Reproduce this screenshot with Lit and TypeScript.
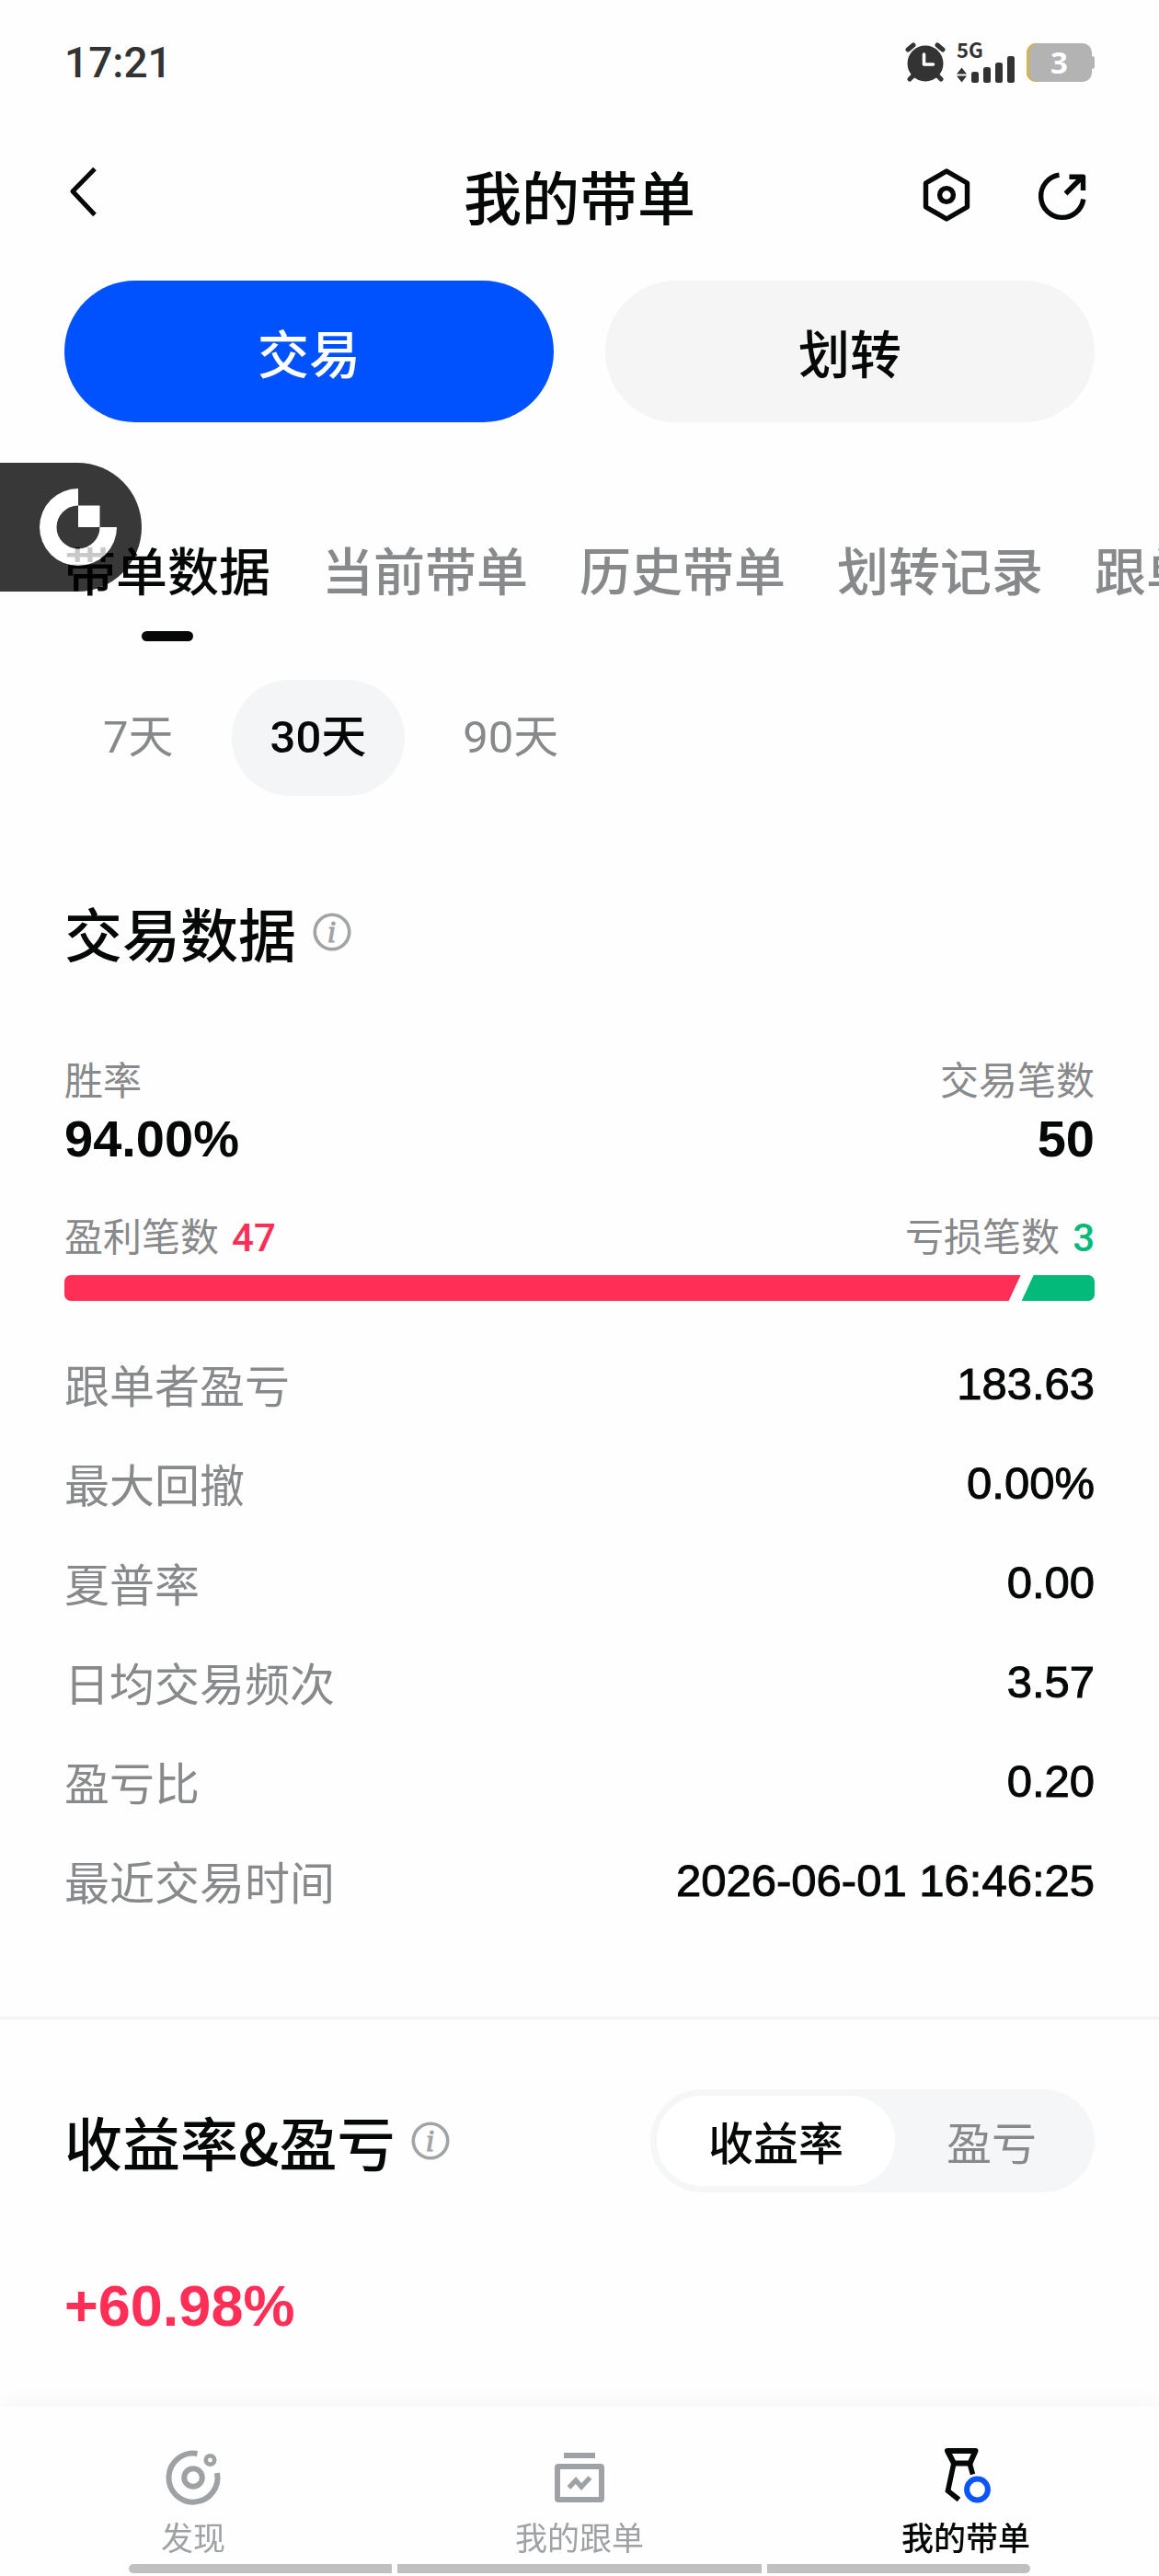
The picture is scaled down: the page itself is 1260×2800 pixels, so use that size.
import { LitElement, html, css, svg } from "lit";
import { customElement, state } from "lit/decorators.js";
import { classMap } from "lit/directives/class-map.js";

const TABS = ["带单数据", "当前带单", "历史带单", "划转记录", "跟单者"];
const PERIODS = ["7天", "30天", "90天"];
const METRICS = ["收益率", "盈亏"];
const STATS: [string, string][] = [
  ["跟单者盈亏", "183.63"],
  ["最大回撤", "0.00%"],
  ["夏普率", "0.00"],
  ["日均交易频次", "3.57"],
  ["盈亏比", "0.20"],
  ["最近交易时间", "2026-06-01 16:46:25"],
];
const WINS = 47;
const LOSSES = 3;

const alarmIcon = svg`
  <svg width="44" height="44" viewBox="0 0 44 44" fill="none" aria-hidden="true">
    <g stroke="#333" stroke-width="5" stroke-linecap="round">
      <path d="M3 8 9 3M41 8 35 3" />
      <path d="M10 35 5 40M34 35 39 40" />
    </g>
    <circle cx="22" cy="23" r="19.500" fill="#333" />
    <path d="M20.500 13v11h10" stroke="#fff" stroke-width="3.600" stroke-linecap="round" stroke-linejoin="round" />
  </svg>`;

const signalIcon = svg`
  <svg width="64" height="30" viewBox="0 0 64 30" fill="#333" aria-hidden="true">
    <path d="M0 20.500 5.500 13.500 11 20.500zM0 22.500h11l-5.500 7z" />
    <rect x="16" y="18" width="8" height="12" rx="2.500" />
    <rect x="29" y="13" width="8" height="17" rx="2.500" />
    <rect x="42" y="8" width="8" height="22" rx="2.500" />
    <rect x="55" y="1" width="8" height="29" rx="2.500" />
  </svg>`;

const backIcon = svg`
  <svg width="42" height="60" viewBox="0 0 42 60" fill="none" stroke="#060808" stroke-width="5" aria-hidden="true">
    <path d="M33 3.500 9 28l24 25.500" stroke-linejoin="round" />
  </svg>`;

const settingsIcon = svg`
  <svg width="70" height="60" viewBox="-7 0 70 60" fill="none" stroke="#060808" stroke-width="5.400" aria-hidden="true">
    <path d="M28 4 50.500 17v26L28 56 5.500 43V17z" stroke-linejoin="round" />
    <circle cx="28" cy="30" r="7.400" />
  </svg>`;

const shareIcon = svg`
  <svg width="70" height="60" viewBox="-7 0 70 60" fill="none" stroke="#060808" stroke-width="5.400" aria-hidden="true">
    <path d="M24.500 8.200A23.200 23.200 0 1 0 50.800 34.500" />
    <path d="M31.500 28.500 49 11" />
    <path d="M35.500 10.200H50.500V25" stroke-linejoin="round" />
  </svg>`;

const infoIcon = svg`
  <svg width="42" height="42" viewBox="0 0 42 42" aria-hidden="true">
    <circle cx="21" cy="21" r="18.700" fill="none" stroke="#a1a3a5" stroke-width="3.600" />
    <text x="20.500" y="32" text-anchor="middle" class="info-i">i</text>
  </svg>`;

const brandIcon = svg`
  <svg width="84" height="84" viewBox="0 0 84 84" fill="#fff" aria-hidden="true">
    <path d="M42 0A42 42 0 1 0 84 42H65.500A23.500 23.500 0 1 1 42 18.500z" />
    <path d="M42 18.500h23.500V42H42z" />
  </svg>`;

const discoverIcon = svg`
  <svg width="64" height="64" viewBox="0 0 64 64" fill="none" stroke="#9fa2a4" stroke-width="6" aria-hidden="true">
    <path d="M36.500 6A26.500 26.500 0 1 0 58 27" />
    <circle cx="32" cy="32" r="9.800" />
    <circle cx="50.500" cy="13" r="4.700" stroke-width="4.600" />
  </svg>`;

const followIcon = svg`
  <svg width="64" height="64" viewBox="0 0 64 64" fill="none" stroke="#9fa2a4" stroke-width="6" aria-hidden="true">
    <path d="M15 8h34" />
    <rect x="8" y="20" width="48" height="36" rx="1" />
    <path d="M20.500 43 28 35l6 7 9.500-10" stroke-width="5.400" />
  </svg>`;

const leadIcon = svg`
  <svg width="64" height="64" viewBox="0 0 64 64" fill="none" stroke="#060808" stroke-width="6" aria-hidden="true">
    <path d="M12 3H42.500L36.500 16.500H19z" stroke-linejoin="round" />
    <path d="M19 16 12.500 46.500 24.500 56" stroke-width="5.600" />
    <path d="M36 16 39.500 28.500" stroke-width="5.600" />
    <circle cx="44.500" cy="45" r="11.400" stroke="#0a55f7" />
  </svg>`;

const NAV = [
  { label: "发现", icon: discoverIcon },
  { label: "我的跟单", icon: followIcon },
  { label: "我的带单", icon: leadIcon },
];

@customElement("app-root")
export class AppRoot extends LitElement {
  @state() private tab = 0;
  @state() private period = 1;
  @state() private metric = 0;

  static styles = css`
    :host {
      display: block;
      font-family: Roboto, "Noto Sans CJK SC", sans-serif;
      color: #060808;
      background: #fefefe;
    }
    * {
      box-sizing: border-box;
    }
    button {
      font: inherit;
      color: inherit;
      background: none;
      border: 0;
      margin: 0;
      padding: 0;
      white-space: nowrap;
    }
    h1, h2, dl, dd, dt, p {
      margin: 0;
      font-weight: inherit;
    }
    svg {
      display: block;
      flex: none;
    }
    .page {
      position: relative;
      display: flex;
      flex-direction: column;
      min-height: 100vh;
      overflow: hidden;
    }
    .status {
      display: flex;
      align-items: center;
      justify-content: space-between;
      padding: 38px 70px 37px;
      line-height: 60px;
      color: #333;
    }
    .clock {
      font-size: 46px;
      font-weight: 500;
    }
    .indicators {
      display: flex;
      align-items: center;
      gap: 12px;
    }
    .network {
      font-family: "Noto Sans CJK SC", sans-serif;
      font-size: 22px;
      font-weight: 700;
      line-height: 14px;
    }
    .battery {
      display: flex;
      align-items: center;
    }
    .battery-body {
      width: 71px;
      border-radius: 10px;
      background: #b3b3b3;
      box-shadow: inset 3px 0 #d5b350;
      color: #fff;
      font-family: "Open Sans", sans-serif;
      font-size: 33px;
      font-weight: 700;
      line-height: 42px;
      text-align: center;
    }
    .battery-tip {
      width: 3px;
      height: 14px;
      border-radius: 0 3px 3px 0;
      background: #b3b3b3;
    }
    .header {
      display: grid;
      grid-template-columns: 1fr auto 1fr;
      align-items: center;
      padding: 37px 70px 41px;
    }
    .title, .action, .heading h2, .stat dt, .switch, .nav-item {
      font-family: "Noto Sans CJK SC", sans-serif;
    }
    .title {
      font-size: 63px;
      font-weight: 500;
      line-height: 80px;
    }
    .tools {
      display: flex;
      justify-content: flex-end;
      gap: 56px;
    }
    .actions {
      display: grid;
      grid-template-columns: 1fr 1fr;
      gap: 56px;
      padding: 12px 70px 0;
    }
    .action {
      border-radius: 77px;
      background: #f5f5f5;
      font-size: 56px;
      font-weight: 500;
      line-height: 154px;
    }
    .primary {
      background: #0052ff;
      color: #fff;
    }
    .tabs {
      display: flex;
      gap: 56px;
      padding: 124px 0 0 70px;
      font-size: 56px;
      font-weight: 500;
      line-height: 80px;
      color: #87898b;
    }
    .tab {
      display: flex;
      flex: none;
      flex-direction: column;
      align-items: center;
      gap: 23px;
    }
    .tab.on {
      color: #060808;
    }
    .tab.on::after {
      content: "";
      width: 56px;
      height: 11px;
      border-radius: 6px;
      background: #060808;
    }
    .periods {
      display: flex;
      gap: 21px;
      padding: 42px 70px 0;
      font-size: 49px;
      line-height: 126px;
      color: #87898b;
    }
    .period {
      padding: 0 42px;
      border-radius: 63px;
    }
    .period.on {
      background: #f4f5f7;
      color: #060808;
      font-weight: 500;
    }
    .section {
      padding: 108px 70px 0;
    }
    .heading {
      display: flex;
      align-items: center;
      gap: 18px;
    }
    .heading h2 {
      font-size: 63px;
      font-weight: 500;
      line-height: 80px;
    }
    .info-i {
      font-family: "Liberation Serif", serif;
      font-size: 34px;
      font-style: italic;
      fill: #a1a3a5;
      stroke: #a1a3a5;
      stroke-width: 1px;
    }
    .split {
      display: flex;
      align-items: flex-end;
      justify-content: space-between;
    }
    .summary {
      padding-top: 93px;
      font-size: 42px;
      line-height: 60px;
    }
    .summary div:last-child {
      text-align: right;
    }
    .label {
      color: #87898b;
    }
    .big {
      font-family: "Liberation Sans", sans-serif;
      font-size: 56px;
      font-weight: 700;
      line-height: 64px;
    }
    .counts {
      padding: 46px 0 10px;
      font-size: 42px;
      line-height: 60px;
    }
    .count {
      display: flex;
      gap: 14px;
    }
    .win, .loss {
      font-weight: 500;
    }
    .win {
      color: #ff2e57;
    }
    .loss {
      color: #03ba7b;
    }
    .ratio {
      display: flex;
      gap: 1px;
      height: 28px;
      overflow: hidden;
      border-radius: 7px;
    }
    .ratio-win {
      flex-basis: 0;
      background: #ff2e57;
      clip-path: polygon(0 0, 100% 0, calc(100% - 13px) 100%, 0 100%);
    }
    .ratio-loss {
      flex-basis: 13px;
      background: #03ba7b;
      clip-path: polygon(13px 0, 100% 0, 100% 100%, 0 100%);
    }
    .stats {
      display: grid;
      gap: 48px;
      padding: 60px 0 118px;
      font-size: 49px;
      line-height: 60px;
    }
    .stat {
      display: flex;
      justify-content: space-between;
    }
    .stat dd {
      font-family: "Liberation Sans", sans-serif;
      -webkit-text-stroke: 1px currentColor;
    }
    .returns {
      flex: 1;
      padding: 76px 70px 60px;
      border-top: 3px solid #f3f3f4;
    }
    .returns .split {
      align-items: center;
    }
    .switch {
      display: flex;
      padding: 7px;
      border-radius: 56px;
      background: #f4f6f8;
      font-size: 49px;
      line-height: 98px;
      color: #87898b;
    }
    .metric {
      padding: 0 56px;
      border-radius: 49px;
    }
    .metric.on {
      background: #fff;
      color: #060808;
      font-weight: 500;
    }
    .rate {
      padding-top: 83px;
      font-family: "Liberation Sans", sans-serif;
      font-size: 63px;
      font-weight: 700;
      line-height: 80px;
      color: #ff2e57;
    }
    .nav {
      position: sticky;
      bottom: 0;
      padding-bottom: 3px;
      background: #fefefe;
      box-shadow: 0 -6px 20px #00000008;
    }
    .nav-items {
      display: grid;
      grid-template-columns: repeat(3, 1fr);
      padding-top: 45px;
    }
    .nav-item {
      display: flex;
      flex-direction: column;
      align-items: center;
      gap: 8px;
      color: #9fa2a4;
      text-decoration: none;
      font-size: 35px;
      line-height: 48px;
    }
    .nav-item.on {
      color: #060808;
      font-weight: 500;
    }
    .home {
      display: grid;
      grid-template-columns: 286fr 397fr 286fr;
      gap: 6px;
      height: 10px;
      margin: 6px 140px 0;
      border-radius: 5px;
      overflow: hidden;
    }
    .home span {
      background: #c0c0c0;
    }
    .float {
      position: absolute;
      top: 503px;
      left: 0;
      width: 154px;
      height: 140px;
      padding: 28px 27px 28px 43px;
      border-radius: 0 70px 70px 0;
      background: #000;
      opacity: 0.78;
    }
  `;

  private renderStatus() {
    return html`
      <div class="status">
        <span class="clock">17:21</span>
        <div class="indicators">
          ${alarmIcon}
          <div class="network">5G${signalIcon}</div>
          <div class="battery">
            <span class="battery-body">3</span><span class="battery-tip"></span>
          </div>
        </div>
      </div>
    `;
  }

  render() {
    return html`
      <div class="page">
        ${this.renderStatus()}
        <header class="header">
          <div><button aria-label="返回">${backIcon}</button></div>
          <h1 class="title">我的带单</h1>
          <div class="tools">
            <button aria-label="设置">${settingsIcon}</button>
            <button aria-label="分享">${shareIcon}</button>
          </div>
        </header>

        <div class="actions">
          <button class="action primary">交易</button>
          <button class="action">划转</button>
        </div>

        <div class="tabs" role="tablist">
          ${TABS.map(
            (t, i) => html`<button
              role="tab"
              aria-selected=${i === this.tab}
              class=${classMap({ tab: true, on: i === this.tab })}
              @click=${() => (this.tab = i)}
            >${t}</button>`
          )}
        </div>

        <div class="periods">
          ${PERIODS.map(
            (p, i) => html`<button
              aria-pressed=${i === this.period}
              class=${classMap({ period: true, on: i === this.period })}
              @click=${() => (this.period = i)}
            >${p}</button>`
          )}
        </div>

        <section class="section">
          <div class="heading">
            <h2>交易数据</h2>
            <button aria-label="交易数据说明">${infoIcon}</button>
          </div>
          <div class="split summary">
            <div>
              <p class="label">胜率</p>
              <p class="big">94.00%</p>
            </div>
            <div>
              <p class="label">交易笔数</p>
              <p class="big">${WINS + LOSSES}</p>
            </div>
          </div>
          <div class="split counts">
            <p class="count"><span class="label">盈利笔数</span><span class="win">${WINS}</span></p>
            <p class="count"><span class="label">亏损笔数</span><span class="loss">${LOSSES}</span></p>
          </div>
          <div class="ratio">
            <div class="ratio-win" style="flex-grow:${WINS}"></div>
            <div class="ratio-loss" style="flex-grow:${LOSSES}"></div>
          </div>
          <dl class="stats">
            ${STATS.map(
              ([k, v]) => html`<div class="stat"><dt class="label">${k}</dt><dd>${v}</dd></div>`
            )}
          </dl>
        </section>

        <section class="returns">
          <div class="split">
            <div class="heading">
              <h2>收益率&amp;盈亏</h2>
              <button aria-label="收益率说明">${infoIcon}</button>
            </div>
            <div class="switch">
              ${METRICS.map(
                (m, i) => html`<button
                  aria-pressed=${i === this.metric}
                  class=${classMap({ metric: true, on: i === this.metric })}
                  @click=${() => (this.metric = i)}
                >${m}</button>`
              )}
            </div>
          </div>
          <p class="rate">+60.98%</p>
        </section>

        <footer class="nav">
          <nav class="nav-items">
            ${NAV.map(
              (n, i) => html`<a href="#" class=${classMap({ "nav-item": true, on: i === 2 })}>
                ${n.icon}<span>${n.label}</span>
              </a>`
            )}
          </nav>
          <div class="home"><span></span><span></span><span></span></div>
        </footer>

        <button class="float" aria-label="快捷入口">${brandIcon}</button>
      </div>
    `;
  }
}
